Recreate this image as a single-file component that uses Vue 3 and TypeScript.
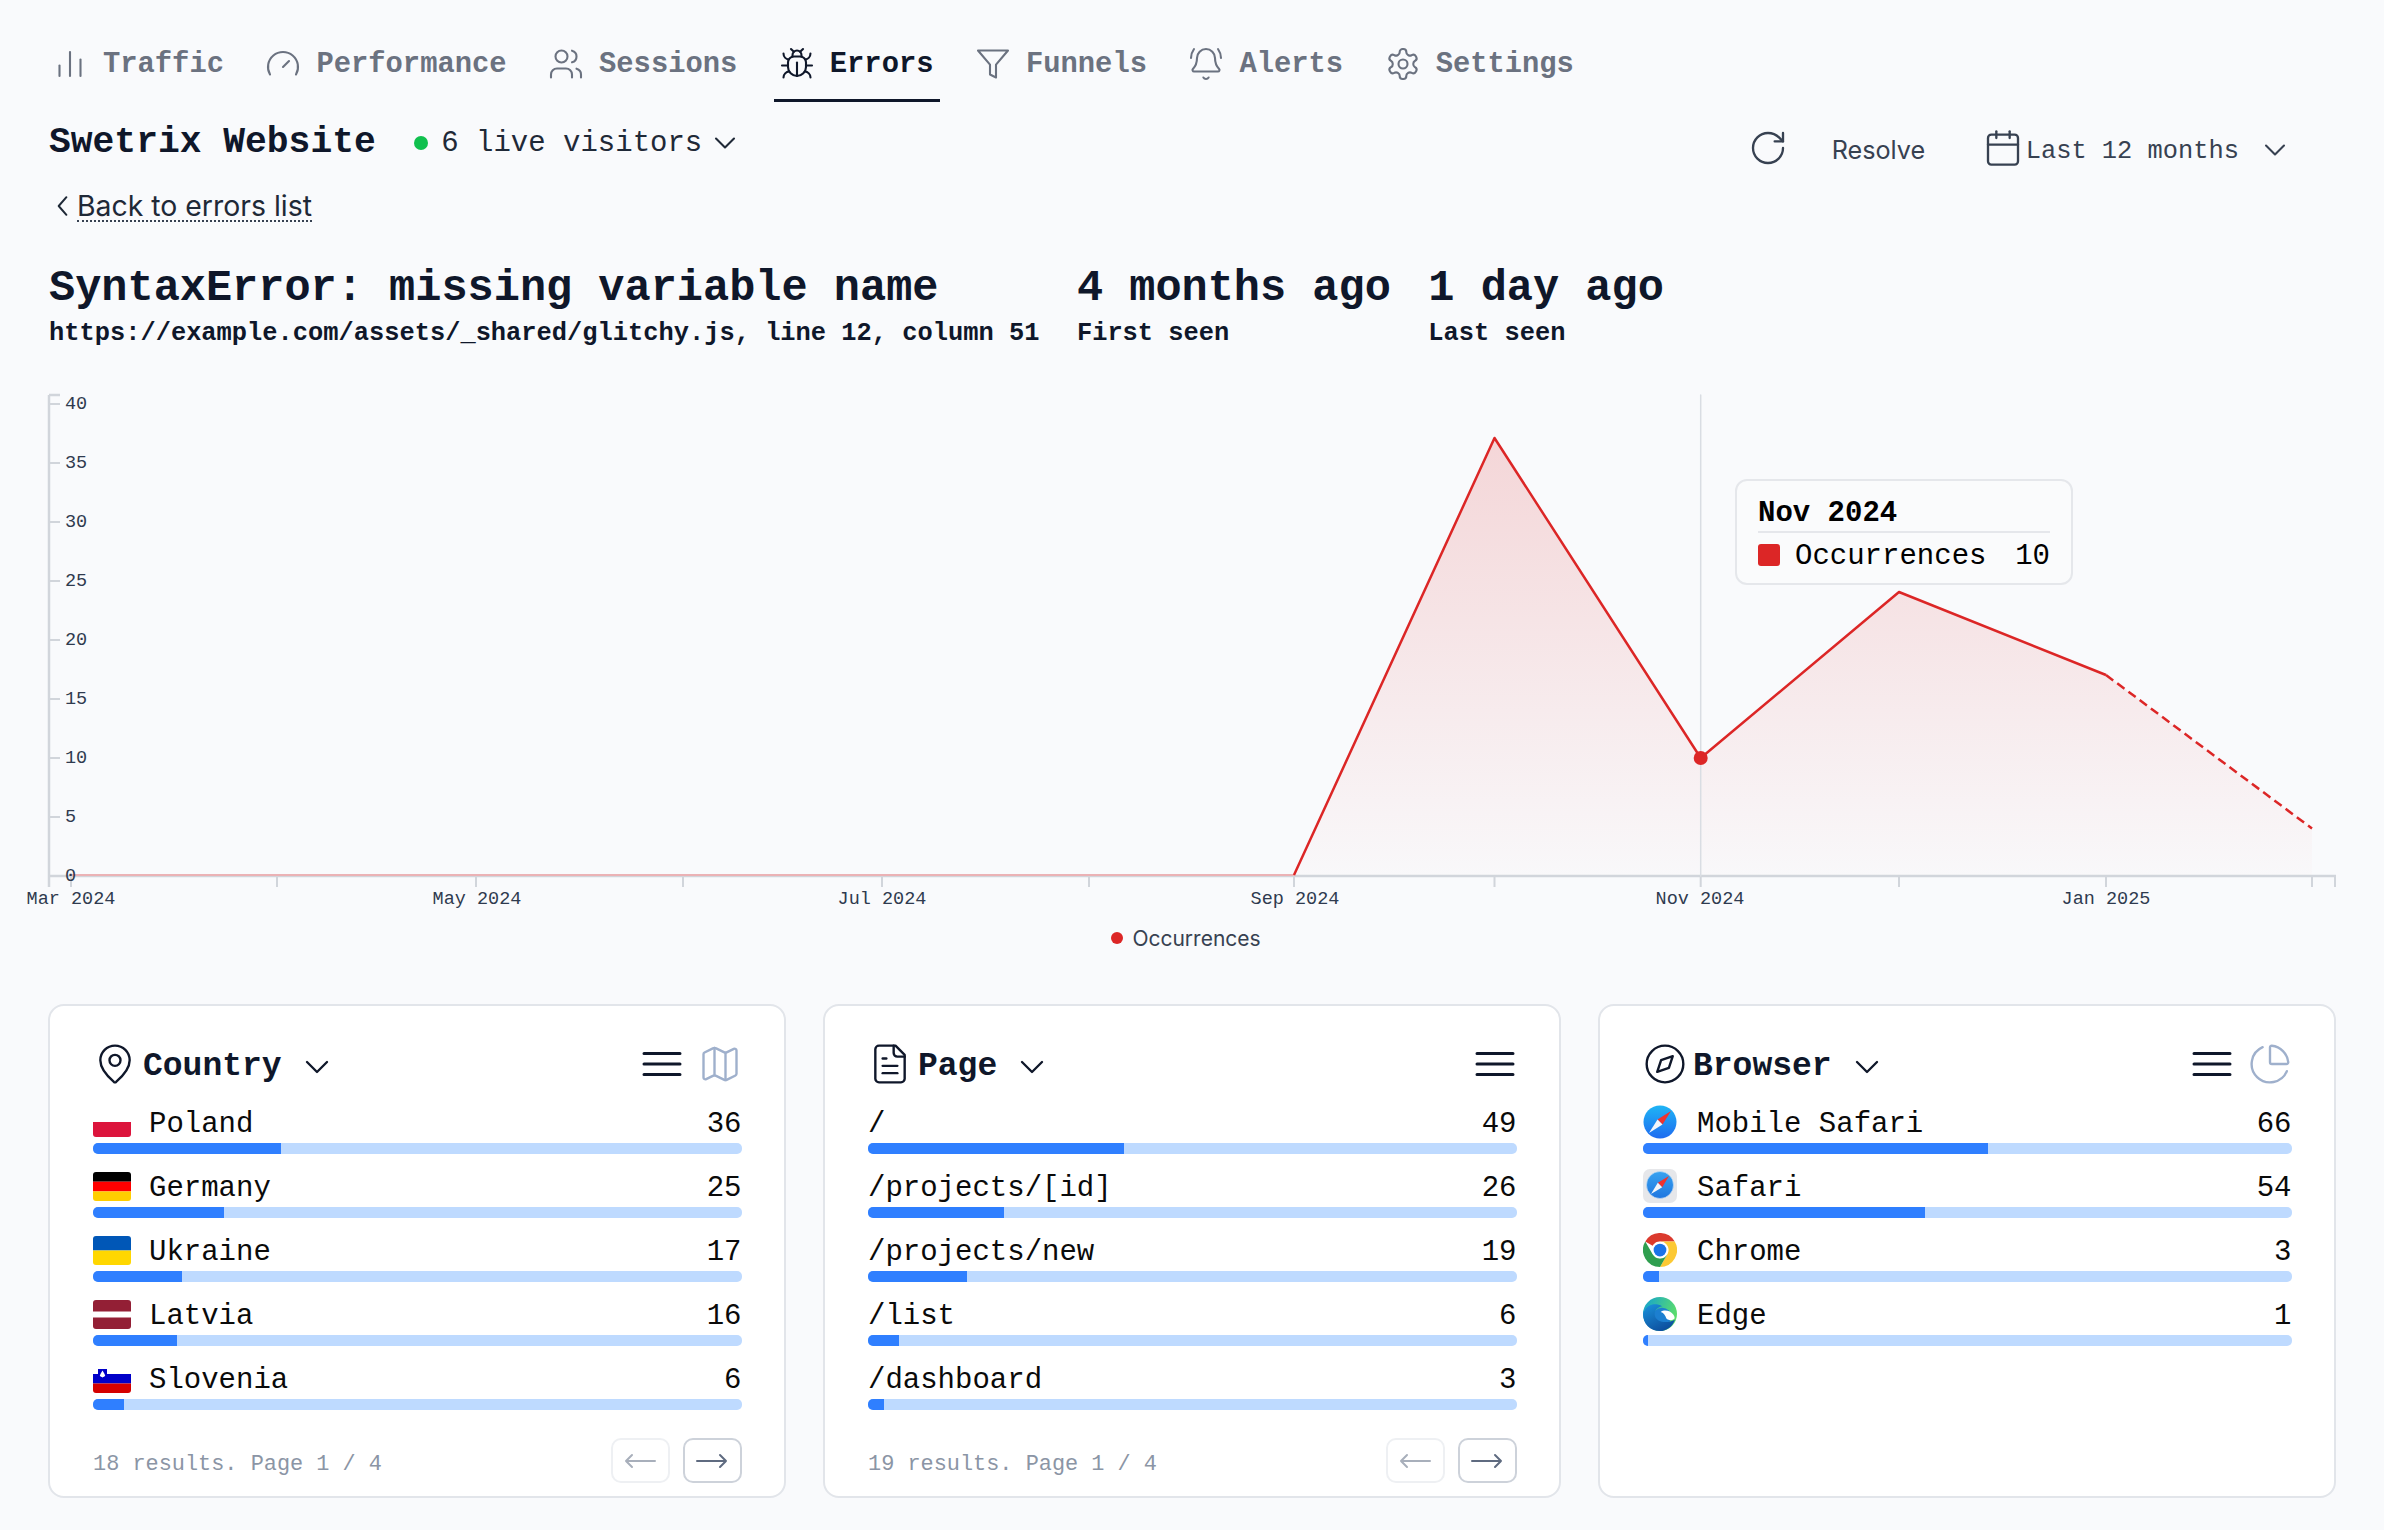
<template>
  <div class="page">
    <nav class="tabs">
      <a v-for="tab in tabs" :key="tab.label" class="tab" :class="{ active: tab.label === 'Errors' }">
        <svg class="tab-icon" viewBox="0 0 24 24"><path v-for="d in tab.icon" :key="d" :d="d" /></svg>
        <span>{{ tab.label }}</span>
      </a>
    </nav>

    <header class="title-row">
      <div class="title-left">
        <h2 class="site">Swetrix Website</h2>
        <i class="live-dot"></i>
        <span class="live">6 live visitors</span>
        <svg class="live-chev" viewBox="0 0 24 24"><path d="m6 9 6 6 6-6" /></svg>
      </div>
      <div class="actions">
        <svg class="act-icon" viewBox="0 0 24 24"><path v-for="d in icons.refresh" :key="d" :d="d" /></svg>
        <span class="resolve">Resolve</span>
        <svg class="act-icon" viewBox="0 0 24 24"><path v-for="d in icons.calendar" :key="d" :d="d" /></svg>
        <span class="period">Last 12 months</span>
        <svg class="period-chev" viewBox="0 0 24 24"><path d="m6 9 6 6 6-6" /></svg>
      </div>
    </header>

    <a class="back">
      <svg viewBox="0 0 12 20"><path d="M10 2 3 10l7 8" /></svg>
      <span>Back to errors list</span>
    </a>

    <section class="error-head">
      <div v-for="item in heading" :key="item.sub">
        <h1>{{ item.title }}</h1>
        <p>{{ item.sub }}</p>
      </div>
    </section>

    <section class="chart">
      <svg class="chart-svg" width="2384" height="535" viewBox="0 380 2384 535">
        <defs>
          <linearGradient id="area" x1="0" y1="438" x2="0" y2="876" gradientUnits="userSpaceOnUse">
            <stop offset="0" stop-color="#dc2626" stop-opacity="0.17" />
            <stop offset="1" stop-color="#dc2626" stop-opacity="0.01" />
          </linearGradient>
        </defs>
        <path class="area" d="M71 875H1294L1494.5 438 1700.7 758 1899 592 2106 675 2312 828.5V875Z" />
        <path class="axis" d="M49 395V887M49 395H60M49 876H2336" />
        <path v-for="y in yTicks" :key="y.label" class="axis-thin" :d="`M49 ${y.pos}H60`" />
        <path v-for="x in xTicks" :key="x" class="axis-thin" :d="`M${x} 876V887`" />
        <path class="axis-thin" d="M2335 876V887" />
        <path class="cursor" d="M1700.7 395V876" />
        <path class="zero-line" d="M71 875H1294" />
        <path class="line" d="M1294 875L1494.5 438 1700.7 758 1899 592 2106 675" />
        <path class="line" stroke-dasharray="9 5" d="M2106 675L2312 828.5" />
        <circle cx="1700.7" cy="758" r="7" fill="#dc2626" />
        <text v-for="y in yTicks" :key="y.label" class="tick" x="65" :y="y.pos + 5">{{ y.label }}</text>
        <text v-for="x in xLabels" :key="x.label" class="tick" text-anchor="middle" :x="x.pos" y="904">{{ x.label }}</text>
      </svg>
      <div class="tooltip">
        <div class="tip-title">Nov 2024</div>
        <div class="tip-row">
          <i></i>
          <span>Occurrences</span>
          <b>10</b>
        </div>
      </div>
    </section>

    <div class="legend"><i></i><span>Occurrences</span></div>

    <section class="panels">
      <article v-for="panel in panels" :key="panel.title" class="panel">
        <div class="panel-head">
          <svg class="head-icon" viewBox="0 0 24 24"><path v-for="d in panel.icon" :key="d" :d="d" /></svg>
          <h3>{{ panel.title }}</h3>
          <svg class="head-chev" viewBox="0 0 24 24"><path d="m6 9 6 6 6-6" /></svg>
          <div class="head-right">
            <svg class="burger" viewBox="0 0 44 44"><path d="M4 11.5h36M4 22h36M4 32.5h36" /></svg>
            <svg v-if="panel.alt" class="head-icon alt" viewBox="0 0 24 24"><path v-for="d in panel.alt" :key="d" :d="d" /></svg>
          </div>
        </div>

        <ul class="rows">
          <li v-for="row in panel.rows" :key="row.name">
            <div class="row-label">
              <svg v-if="row.flag" class="flag" viewBox="0 0 38 29">
                <defs><clipPath :id="'clip-' + row.flag"><rect width="38" height="29" rx="3" /></clipPath></defs>
                <g :clip-path="`url(#clip-${row.flag})`">
                  <template v-if="row.flag === 'pl'">
                    <rect y="14" width="38" height="15" fill="#dc143c" />
                  </template>
                  <template v-else-if="row.flag === 'de'">
                    <rect width="38" height="9.7" fill="#000" />
                    <rect y="9.7" width="38" height="9.7" fill="#f00" />
                    <rect y="19.4" width="38" height="9.6" fill="#ffce00" />
                  </template>
                  <template v-else-if="row.flag === 'ua'">
                    <rect width="38" height="14.5" fill="#0057b7" />
                    <rect y="14.5" width="38" height="14.5" fill="#ffd700" />
                  </template>
                  <template v-else-if="row.flag === 'lv'">
                    <rect width="38" height="11.5" fill="#931f35" />
                    <rect y="17.5" width="38" height="11.5" fill="#931f35" />
                  </template>
                  <template v-else>
                    <rect y="10" width="38" height="9.5" fill="#0000c8" />
                    <rect y="19.5" width="38" height="9.5" fill="#d40000" />
                    <path d="M5 5h9v6c0 2.5-2.5 3.5-4.500 4.500C7.500 14.500 5 13.500 5 11Z" fill="#0000c8" />
                    <path d="M9.500 6.500 11 9l1.200 2.500c-.6 1-1.600 1.500-2.700 2-1.100-.5-2.100-1-2.700-2L8 9Z" fill="#fff" />
                  </template>
                </g>
              </svg>

              <svg v-if="row.browser === 'msafari'" class="browser" viewBox="0 0 34 34">
                <defs>
                  <linearGradient id="msafari" x1="0" y1="0" x2="0" y2="1">
                    <stop offset="0" stop-color="#1fb5f5" />
                    <stop offset="1" stop-color="#1e6bf0" />
                  </linearGradient>
                </defs>
                <circle cx="17" cy="17" r="16.500" fill="url(#msafari)" />
                <path d="M28 6 14.500 14.500 19.500 19.500Z" fill="#f0322f" />
                <path d="M6 28 14.500 14.500 19.500 19.500Z" fill="#f4f6fa" />
              </svg>
              <svg v-else-if="row.browser === 'safari'" class="browser" viewBox="0 0 34 34">
                <defs>
                  <linearGradient id="dsafari" x1="0" y1="0" x2="0" y2="1">
                    <stop offset="0" stop-color="#38a3f0" />
                    <stop offset="1" stop-color="#1f76e0" />
                  </linearGradient>
                </defs>
                <rect width="34" height="34" rx="7" fill="#e6e7ea" />
                <circle cx="17" cy="16" r="13.500" fill="url(#dsafari)" stroke="#cfe3f6" stroke-width="0.6" />
                <path d="M26 7 14.800 13.800 19.200 18.200Z" fill="#f0322f" />
                <path d="M8 25 14.800 13.800 19.200 18.200Z" fill="#f4f6fa" />
              </svg>
              <svg v-else-if="row.browser === 'chrome'" class="browser" viewBox="0 0 48 48">
                <path d="M3.200 12A24 24 0 0 1 44.800 12H24A12 12 0 0 0 13.600 18Z" fill="#db3a2e" />
                <path d="M44.800 12A24 24 0 0 1 24 48L34.400 30A12 12 0 0 0 24 12Z" fill="#fcc934" />
                <path d="M24 48A24 24 0 0 1 3.200 12L13.600 30A12 12 0 0 0 34.400 30Z" fill="#2f9e4f" />
                <circle cx="24" cy="24" r="11.500" fill="#fff" />
                <circle cx="24" cy="24" r="9" fill="#1a73e8" />
              </svg>
              <svg v-else-if="row.browser === 'edge'" class="browser" viewBox="0 0 48 48">
                <defs>
                  <linearGradient id="edgeTop" x1="0" y1="0" x2="1" y2="0.4">
                    <stop offset="0" stop-color="#11a0d4" />
                    <stop offset="1" stop-color="#5bdc6c" />
                  </linearGradient>
                  <linearGradient id="edgeLow" x1="0" y1="0" x2="0.6" y2="1">
                    <stop offset="0" stop-color="#1b93dc" />
                    <stop offset="1" stop-color="#0d4f9e" />
                  </linearGradient>
                </defs>
                <circle cx="24" cy="24" r="24" fill="url(#edgeTop)" />
                <circle cx="27" cy="28" r="13" fill="#1c7fd0" />
                <path d="M45 32C42 42 33 48 24 48 10 48 0 38 0 24 1 18 2 20 2 20 6 10 18 8 27 13 20 14 15 20 17 27 20 36 34 38 45 32Z" fill="url(#edgeLow)" />
                <path d="M25 21C30 17 39 19 43 25 45 28 45 30 44 31 39 34 33 33 32 28 31 25 29 22 25 21Z" fill="#fff" />
              </svg>

              <span class="row-name">{{ row.name }}</span>
              <span class="row-value">{{ row.value }}</span>
            </div>
            <div class="bar"><div class="bar-fill" :style="{ width: (row.value / 124) * 100 + '%' }"></div></div>
          </li>
        </ul>

        <footer v-if="panel.results" class="panel-foot">
          <span>{{ panel.results }}</span>
          <div class="pager">
            <button class="off"><svg viewBox="0 0 32 16"><path d="M31 8H2M8 2 2 8l6 6" /></svg></button>
            <button><svg viewBox="0 0 32 16"><path d="M1 8h29M24 2l6 6-6 6" /></svg></button>
          </div>
        </footer>
      </article>
    </section>
  </div>
</template>

<script setup lang="ts">
interface Row {
  name: string
  value: number
  flag?: string
  browser?: string
}

const icons: Record<string, string[]> = {
  traffic: ['M5 20v-7', 'M12 20V4', 'M19 20V9'],
  gauge: ['m12 14 4-4', 'M3.34 19a10 10 0 1 1 17.32 0'],
  users: [
    'M16 21v-2a4 4 0 0 0-4-4H6a4 4 0 0 0-4 4v2',
    'M5 7a4 4 0 1 0 8 0a4 4 0 1 0-8 0',
    'M22 21v-2a4 4 0 0 0-3-3.87',
    'M16 3.13a4 4 0 0 1 0 7.75',
  ],
  bug: [
    'm8 2 1.88 1.88',
    'M14.12 3.88 16 2',
    'M9 7.13v-1a3.003 3.003 0 1 1 6 0v1',
    'M12 20c-3.3 0-6-2.7-6-6v-3a4 4 0 0 1 4-4h4a4 4 0 0 1 4 4v3c0 3.3-2.7 6-6 6',
    'M12 20v-9',
    'M6.53 9C4.6 8.8 3 7.1 3 5',
    'M6 13H2',
    'M3 21c0-2.1 1.7-3.9 3.8-4',
    'M20.97 5c0 2.1-1.6 3.8-3.5 4',
    'M22 13h-4',
    'M17.2 17c2.1.1 3.8 1.9 3.8 4',
  ],
  funnel: ['M22 3H2l8 9.46V19l4 2v-8.54L22 3z'],
  bell: [
    'M10.268 21a2 2 0 0 0 3.464 0',
    'M22 8c0-2.3-.8-4.3-2-6',
    'M3.262 15.326A1 1 0 0 0 4 17h16a1 1 0 0 0 .74-1.673C19.41 13.956 18 12.499 18 8A6 6 0 0 0 6 8c0 4.499-1.411 5.956-2.738 7.326',
    'M4 2C2.8 3.7 2 5.7 2 8',
  ],
  settings: [
    'M12.22 2h-.44a2 2 0 0 0-2 2v.18a2 2 0 0 1-1 1.73l-.43.25a2 2 0 0 1-2 0l-.15-.08a2 2 0 0 0-2.73.73l-.22.38a2 2 0 0 0 .73 2.73l.15.1a2 2 0 0 1 1 1.72v.51a2 2 0 0 1-1 1.74l-.15.09a2 2 0 0 0-.73 2.73l.22.38a2 2 0 0 0 2.73.73l.15-.08a2 2 0 0 1 2 0l.43.25a2 2 0 0 1 1 1.73V20a2 2 0 0 0 2 2h.44a2 2 0 0 0 2-2v-.18a2 2 0 0 1 1-1.73l.43-.25a2 2 0 0 1 2 0l.15.08a2 2 0 0 0 2.73-.73l.22-.39a2 2 0 0 0-.73-2.73l-.15-.08a2 2 0 0 1-1-1.74v-.5a2 2 0 0 1 1-1.74l.15-.09a2 2 0 0 0 .73-2.73l-.22-.38a2 2 0 0 0-2.73-.73l-.15.08a2 2 0 0 1-2 0l-.43-.25a2 2 0 0 1-1-1.73V4a2 2 0 0 0-2-2z',
    'M9 12a3 3 0 1 0 6 0a3 3 0 1 0-6 0',
  ],
  refresh: ['M21 12a9 9 0 1 1-9-9c2.52 0 4.93 1 6.74 2.74L21 8', 'M21 3v5h-5'],
  calendar: ['M8 2v4', 'M16 2v4', 'M5 4h14a2 2 0 0 1 2 2v14a2 2 0 0 1-2 2H5a2 2 0 0 1-2-2V6a2 2 0 0 1 2-2z', 'M3 10h18'],
  pin: [
    'M20 10c0 4.993-5.539 10.193-7.399 11.799a1 1 0 0 1-1.202 0C9.539 20.193 4 14.993 4 10a8 8 0 0 1 16 0',
    'M9 10a3 3 0 1 0 6 0a3 3 0 1 0-6 0',
  ],
  file: [
    'M15 2H6a2 2 0 0 0-2 2v16a2 2 0 0 0 2 2h12a2 2 0 0 0 2-2V7Z',
    'M14 2v4a2 2 0 0 0 2 2h4',
    'M10 9H8',
    'M16 13H8',
    'M16 17H8',
  ],
  compass: ['M2 12a10 10 0 1 0 20 0a10 10 0 1 0-20 0', 'm16.24 7.76-2.12 6.36-6.36 2.12 2.12-6.36 6.36-2.12z'],
  map: [
    'M14.106 5.553a2 2 0 0 0 1.788 0l3.659-1.83A1 1 0 0 1 21 4.619v12.764a1 1 0 0 1-.553.894l-4.553 2.277a2 2 0 0 1-1.788 0l-4.212-2.106a2 2 0 0 0-1.788 0l-3.659 1.83A1 1 0 0 1 3 19.381V6.618a1 1 0 0 1 .553-.894l4.553-2.277a2 2 0 0 1 1.788 0z',
    'M15 5.764v15',
    'M9 3.236v15',
  ],
  pie: [
    'M21 12c.552 0 1.005-.449.95-.998a10 10 0 0 0-8.953-8.951c-.55-.055-.998.398-.998.95v8a1 1 0 0 0 1 1z',
    'M21.21 15.89A10 10 0 1 1 8 2.83',
  ],
}

const tabs = [
  { label: 'Traffic', icon: icons.traffic },
  { label: 'Performance', icon: icons.gauge },
  { label: 'Sessions', icon: icons.users },
  { label: 'Errors', icon: icons.bug },
  { label: 'Funnels', icon: icons.funnel },
  { label: 'Alerts', icon: icons.bell },
  { label: 'Settings', icon: icons.settings },
]

const heading = [
  { title: 'SyntaxError: missing variable name', sub: 'https://example.com/assets/_shared/glitchy.js, line 12, column 51' },
  { title: '4 months ago', sub: 'First seen' },
  { title: '1 day ago', sub: 'Last seen' },
]

const yTicks = [40, 35, 30, 25, 20, 15, 10, 5, 0].map((v) => ({ label: String(v), pos: 876 - v * 11.8 }))
const xTicks = [71, 277, 476, 683, 882, 1089, 1294, 1494.5, 1700.7, 1899, 2106, 2312]
const xLabels = [
  { label: 'Mar 2024', pos: 71 },
  { label: 'May 2024', pos: 477 },
  { label: 'Jul 2024', pos: 882 },
  { label: 'Sep 2024', pos: 1295 },
  { label: 'Nov 2024', pos: 1700 },
  { label: 'Jan 2025', pos: 2106 },
]

const panels: { title: string; icon: string[]; alt?: string[]; results?: string; rows: Row[] }[] = [
  {
    title: 'Country',
    icon: icons.pin,
    alt: icons.map,
    results: '18 results. Page 1 / 4',
    rows: [
      { name: 'Poland', value: 36, flag: 'pl' },
      { name: 'Germany', value: 25, flag: 'de' },
      { name: 'Ukraine', value: 17, flag: 'ua' },
      { name: 'Latvia', value: 16, flag: 'lv' },
      { name: 'Slovenia', value: 6, flag: 'si' },
    ],
  },
  {
    title: 'Page',
    icon: icons.file,
    results: '19 results. Page 1 / 4',
    rows: [
      { name: '/', value: 49 },
      { name: '/projects/[id]', value: 26 },
      { name: '/projects/new', value: 19 },
      { name: '/list', value: 6 },
      { name: '/dashboard', value: 3 },
    ],
  },
  {
    title: 'Browser',
    icon: icons.compass,
    alt: icons.pie,
    rows: [
      { name: 'Mobile Safari', value: 66, browser: 'msafari' },
      { name: 'Safari', value: 54, browser: 'safari' },
      { name: 'Chrome', value: 3, browser: 'chrome' },
      { name: 'Edge', value: 1, browser: 'edge' },
    ],
  },
]
</script>

<style scoped>
.page {
  width: 2384px;
  min-height: 1530px;
  font-family: "Liberation Mono", monospace;
  color: #0f172a;
}

svg path:not([fill]) {
  fill: none;
  stroke: currentColor;
  stroke-linecap: round;
  stroke-linejoin: round;
}

.tabs {
  display: flex;
  gap: 30.5px;
  padding: 47px 0 0 47px;
}

.tab {
  display: flex;
  align-items: center;
  gap: 16px;
  padding: 0 6px 18px;
  border-bottom: 3px solid transparent;
  font-size: 28.8px;
  line-height: 32px;
  font-weight: 700;
  color: #6b7280;
}

.tab span {
  padding-top: 2px;
}

.tab.active {
  color: #0f172a;
  border-bottom-color: #0f172a;
}

.tab-icon {
  width: 36px;
  height: 36px;
  margin: -1px;
  stroke-width: 1.4;
}

.title-row {
  display: flex;
  justify-content: space-between;
  align-items: flex-start;
  height: 48px;
  margin-top: 18px;
  padding: 0 91px 0 49px;
}

.title-left {
  display: flex;
  align-items: center;
  height: 40px;
  margin-top: 3px;
}

.site {
  margin: 0;
  font-size: 36.3px;
  line-height: 40px;
  font-weight: 700;
}

.live-dot {
  width: 14px;
  height: 14px;
  margin: 0 13px 0 38.5px;
  border-radius: 50%;
  background: #10c04e;
}

.live {
  font-size: 29px;
  color: #1f2937;
}

.live-chev {
  width: 36px;
  height: 36px;
  margin-left: 5px;
  stroke-width: 1.4;
  color: #1f2937;
}

.actions {
  display: flex;
  align-items: center;
  height: 40px;
  margin-top: 8px;
  color: #374151;
}

.act-icon {
  width: 40px;
  height: 40px;
  stroke-width: 1.4;
}

.resolve {
  margin: 3px 57.5px 0 44px;
  font-family: Inter, sans-serif;
  font-size: 25.2px;
}

.period {
  margin: 6px 0 0 3px;
  font-size: 25.4px;
}

.period-chev {
  width: 36px;
  height: 36px;
  margin: 4px 0 0 18px;
  stroke-width: 1.4;
}

.back {
  display: flex;
  align-items: center;
  gap: 8px;
  height: 34px;
  margin: 21px 0 0 55px;
  font-family: Inter, sans-serif;
  font-size: 28.4px;
  color: #1f2937;
}

.back svg {
  width: 14px;
  height: 22px;
  stroke-width: 1.8;
}

.back span {
  line-height: 29px;
  border-bottom: 2px dotted #374151;
}

.error-head {
  display: flex;
  gap: 37.5px;
  margin-top: 36px;
  padding-left: 49px;
}

.error-head h1 {
  margin: 0;
  padding-top: 8px;
  font-size: 43.6px;
  line-height: 44px;
  font-weight: 700;
}

.error-head p {
  margin: 3px 0 0;
  padding-top: 6px;
  font-size: 25.4px;
  line-height: 28px;
  font-weight: 700;
}

.chart {
  position: relative;
  height: 535px;
  margin-top: 32px;
}

.chart-svg {
  display: block;
}

.chart-svg .axis {
  stroke: #d1d5db;
  stroke-width: 2.5;
  stroke-linecap: butt;
}

.chart-svg .axis-thin {
  stroke: #d1d5db;
  stroke-width: 2;
  stroke-linecap: butt;
}

.chart-svg .cursor {
  stroke: #d9dde3;
  stroke-width: 1.5;
}

.chart-svg .area {
  fill: url(#area);
  stroke: none;
}

.chart-svg .zero-line {
  stroke: #ebb2b5;
  stroke-width: 2;
}

.chart-svg .line {
  stroke: #dc2626;
  stroke-width: 2.500;
  stroke-linecap: butt;
}

.tick {
  font-family: "Liberation Mono", monospace;
  font-size: 18.5px;
  fill: #2f3a4f;
}

.tooltip {
  position: absolute;
  left: 1735px;
  top: 99px;
  box-sizing: border-box;
  width: 338px;
  height: 106px;
  padding: 12px 21px 0;
  border: 2px solid #e5e7eb;
  border-radius: 12px;
  background: #fafbfc;
  font-size: 29px;
  color: #000;
}

.tip-title {
  box-sizing: border-box;
  height: 40px;
  padding-top: 4px;
  line-height: 33px;
  border-bottom: 2px solid #e5e7eb;
  font-weight: 700;
}

.tip-row {
  display: flex;
  align-items: center;
  height: 34px;
  margin-top: 5px;
}

.tip-row span,
.tip-row b {
  padding-top: 3px;
}

.tip-row i {
  width: 22px;
  height: 22px;
  margin-right: 15px;
  border-radius: 3px;
  background: #dc2626;
}

.tip-row b {
  margin-left: auto;
  font-weight: 400;
}

.legend {
  display: flex;
  align-items: center;
  justify-content: center;
  gap: 9px;
  height: 30px;
  margin-top: 8px;
  padding-right: 12px;
  font-family: Inter, sans-serif;
  font-size: 21px;
  color: #374151;
}

.legend i {
  width: 12px;
  height: 12px;
  border-radius: 50%;
  background: #dc2626;
}

.panels {
  display: grid;
  grid-template-columns: repeat(3, 737.5px);
  gap: 37.5px;
  margin-top: 51px;
  padding: 0 48px;
}

.panel {
  display: flex;
  flex-direction: column;
  box-sizing: border-box;
  height: 494px;
  padding: 36px 42px 13px 43px;
  border: 2px solid #e2e5ea;
  border-radius: 16px;
  background: #fff;
}

.panel-head {
  display: flex;
  align-items: center;
  height: 44px;
}

.head-icon {
  flex: none;
  width: 44px;
  height: 44px;
  stroke-width: 1.3;
}

.panel-head h3 {
  margin: 0 15px 0 6px;
  padding-top: 4px;
  font-size: 33px;
  font-weight: 700;
}

.head-chev {
  width: 40px;
  height: 40px;
  margin-top: 5px;
  stroke-width: 1.4;
}

.head-right {
  display: flex;
  align-items: center;
  gap: 14px;
  margin-left: auto;
}

.burger {
  width: 44px;
  height: 44px;
  stroke-width: 3;
}

.burger path {
  stroke-linecap: butt;
}

.alt {
  color: #9fb0cc;
}

.rows {
  display: flex;
  flex-direction: column;
  gap: 15px;
  margin: 19px 0 0;
  padding: 0;
  list-style: none;
}

.row-label {
  display: flex;
  align-items: center;
  height: 34px;
  font-size: 29px;
  color: #0a0a0a;
}

.row-name,
.row-value {
  padding-top: 4px;
}

.flag {
  width: 38px;
  height: 29px;
  margin-right: 18px;
}

.browser {
  width: 34px;
  height: 34px;
  margin: 0 20px 0 0;
}

.row-value {
  margin-left: auto;
}

.bar {
  height: 11px;
  margin-top: 4px;
  border-radius: 5px;
  overflow: hidden;
  background: #bedaff;
}

.bar-fill {
  height: 100%;
  background: #2f7fff;
}

.panel-foot {
  display: flex;
  align-items: center;
  justify-content: space-between;
  margin-top: auto;
  font-size: 21.9px;
  color: #8b95a5;
}

.panel-foot span {
  padding-top: 7px;
}

.pager {
  display: flex;
  gap: 13px;
}

.pager button {
  display: flex;
  align-items: center;
  justify-content: center;
  box-sizing: border-box;
  width: 59px;
  height: 45px;
  padding: 0;
  border: 2px solid #cdd2da;
  border-radius: 10px;
  background: #fff;
  color: #5f6b80;
}

.pager button.off {
  border-color: #eef0f3;
  color: #a8afbb;
}

.pager svg {
  width: 32px;
  height: 16px;
  stroke-width: 2;
}
</style>

<style>
html,
body {
  background: #f9fafc;
}
</style>
